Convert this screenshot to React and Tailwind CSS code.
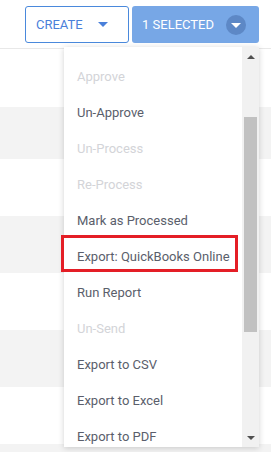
import React from "react";

const items = [
  { label: "Approve", disabled: true },
  { label: "Un-Approve" },
  { label: "Un-Process", disabled: true },
  { label: "Re-Process", disabled: true },
  { label: "Mark as Processed" },
  { label: "Export: QuickBooks Online", marked: true },
  { label: "Run Report" },
  { label: "Un-Send", disabled: true },
  { label: "Export to CSV" },
  { label: "Export to Excel" },
  { label: "Export to PDF" },
];

// table rows behind the menu
const rows = [
  { h: "h-[58px]", gray: false },
  { h: "h-[52px]", gray: true },
  { h: "h-[57px]", gray: false },
  { h: "h-[57px]", gray: true },
  { h: "h-[57px]", gray: false },
  { h: "h-[57px]", gray: true },
  { h: "h-[57px]", gray: false },
  { h: "h-[57px]", gray: true },
];

function Caret({ className }) {
  return (
    <svg width="10" height="5" viewBox="0 0 10 5" className={className}>
      <path d="M0 0 L10 0 L5 5 Z" fill="currentColor" />
    </svg>
  );
}

export default function App() {
  return (
    <div className="relative w-[271px] h-[452px] overflow-hidden bg-white font-['Roboto',sans-serif]">
      {/* toolbar */}
      <div className="h-[49px] border-b border-[#e8e8e8] flex items-start pt-[6px] pl-[25px] gap-[3px]">
        <button className="w-[104px] h-[37px] border border-[#4a89dc] rounded-[3px] flex items-center pl-[10px] text-[13px] text-[#4a80da]">
          CREATE
          <Caret className="ml-[15px] text-[#4a80da]" />
        </button>
        <button className="w-[127px] h-[37px] bg-[#77a7e6] rounded-[3px] flex items-center pl-[10px] text-[13px] text-white">
          1 SELECTED
          <span className="ml-[12px] w-[20px] h-[20px] rounded-full bg-[#5d88c6] flex items-center justify-center">
            <Caret className="text-white mt-[1px]" />
          </span>
        </button>
      </div>

      {rows.map((r, i) => (
        <div key={i} className={`${r.h} ${r.gray ? "bg-[#f3f3f3]" : "bg-white"}`} />
      ))}

      {/* dropdown menu */}
      <div className="absolute left-[64px] top-[47px] w-[195px] h-[400px] bg-white flex shadow-[0_1px_6px_rgba(0,0,0,0.18)]">
        <div className="flex-1 pt-[12px]">
          {items.map((it) => (
            <div
              key={it.label}
              className={`relative h-[36px] flex items-center pl-[13px] text-[13px] ${
                it.disabled ? "text-[#d3d4d8]" : "text-[#5a5e6b]"
              }`}
            >
              {it.label}
              {it.marked && (
                <div className="absolute left-[-3px] top-[-4px] w-[177px] h-[37px] border-[3px] border-[#e41e26]" />
              )}
            </div>
          ))}
        </div>
        <div className="w-[17px] bg-[#f1f1f1] flex flex-col">
          <div className="h-[17px] flex items-center justify-center pt-[2px]">
            <svg width="8" height="4" viewBox="0 0 8 4">
              <path d="M0 4 L8 4 L4 0 Z" fill="#505050" />
            </svg>
          </div>
          <div className="flex-1 px-[2px] pt-[53px] pb-[98px]">
            <div className="h-full bg-[#c1c1c1]" />
          </div>
          <div className="h-[17px] flex items-center justify-center pb-[1px]">
            <svg width="8" height="4" viewBox="0 0 8 4">
              <path d="M0 0 L8 0 L4 4 Z" fill="#505050" />
            </svg>
          </div>
        </div>
      </div>
    </div>
  );
}
